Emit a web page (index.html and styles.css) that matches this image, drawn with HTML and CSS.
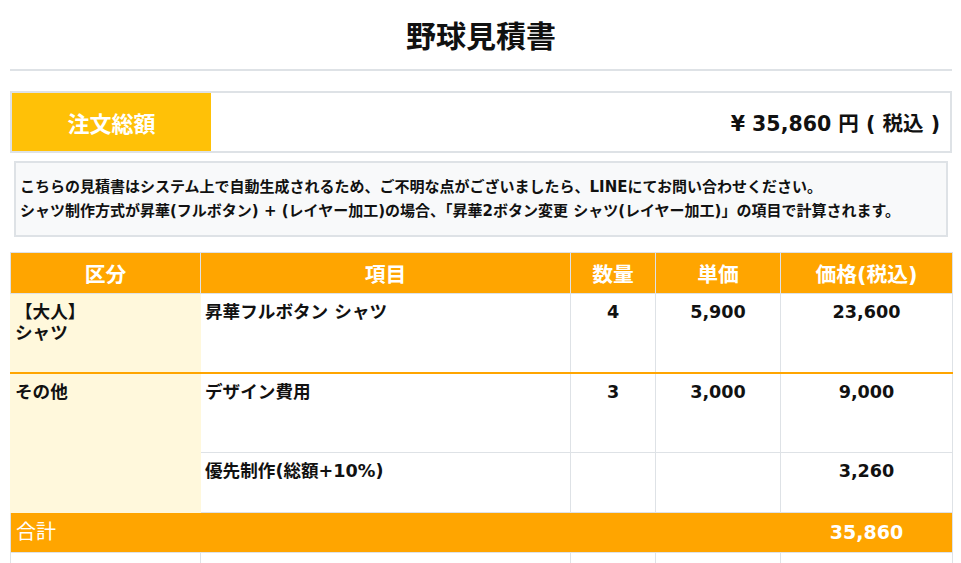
FILE: index.html
```html
<!DOCTYPE html>
<html lang="ja">
<head>
<meta charset="utf-8">
<title>野球見積書</title>
<link rel="stylesheet" href="styles.css">
</head>
<body>
<div class="page">
  <header class="title-bar">
    <h1 class="title">野球見積書</h1>
  </header>

  <section class="summary">
    <div class="summary-label">注文総額</div>
    <div class="summary-amount">¥ 35,860 円 ( 税込 )</div>
  </section>

  <section class="note">
    <p>こちらの見積書はシステム上で自動生成されるため、ご不明な点がございましたら、LINEにてお問い合わせください。</p>
    <p>シャツ制作方式が昇華(フルボタン) + (レイヤー加工)の場合、「昇華2ボタン変更 シャツ(レイヤー加工)」の項目で計算されます。</p>
  </section>

  <table class="estimate">
    <colgroup>
      <col class="c-cat">
      <col class="c-item">
      <col class="c-qty">
      <col class="c-unit">
      <col class="c-price">
    </colgroup>
    <thead>
      <tr>
        <th>区分</th>
        <th>項目</th>
        <th>数量</th>
        <th>単価</th>
        <th>価格(税込)</th>
      </tr>
    </thead>
    <tbody>
      <tr class="row-main">
        <td class="cat">【大人】<br>シャツ</td>
        <td>昇華フルボタン シャツ</td>
        <td class="num">4</td>
        <td class="num">5,900</td>
        <td class="num">23,600</td>
      </tr>
      <tr class="row-main group-sep">
        <td class="cat" rowspan="2">その他</td>
        <td>デザイン費用</td>
        <td class="num">3</td>
        <td class="num">3,000</td>
        <td class="num">9,000</td>
      </tr>
      <tr class="row-sub">
        <td>優先制作(総額+10%)</td>
        <td class="num"></td>
        <td class="num"></td>
        <td class="num">3,260</td>
      </tr>
      <tr class="row-total">
        <td colspan="4" class="total-label">合計</td>
        <td class="num total-value">35,860</td>
      </tr>
      <tr class="row-blank">
        <td></td>
        <td></td>
        <td></td>
        <td></td>
        <td></td>
      </tr>
    </tbody>
  </table>
</div>
</body>
</html>
```

FILE: styles.css
```css
html, body {
  margin: 0;
  padding: 0;
  background: #ffffff;
}

body {
  font-family: "DejaVu Sans", "Noto Sans CJK JP", sans-serif;
  color: #111111;
}

.page {
  width: 942px;
  margin-left: 10px;
}

.title-bar {
  padding-top: 14px;
  padding-bottom: 10px;
  border-bottom: 2px solid #dee2e6;
}

.title {
  margin: 0;
  text-align: center;
  font-size: 30px;
  line-height: 45px;
  font-weight: bold;
}

.summary {
  margin-top: 20px;
  height: 62px;
  box-sizing: border-box;
  border: 2px solid #dee2e6;
  display: flex;
}

.summary-label {
  width: 199px;
  background: #ffc107;
  color: #ffffff;
  font-size: 22px;
  font-weight: bold;
  display: flex;
  align-items: center;
  justify-content: center;
}

.summary-amount {
  flex: 1;
  display: flex;
  align-items: center;
  justify-content: flex-end;
  padding-right: 10px;
  font-size: 20.5px;
  font-weight: bold;
}

.note {
  margin: 8px 4px 0;
  padding: 12px 4px;
  border: 2px solid #dee2e6;
  background: #f8f9fa;
  font-size: 15px;
  line-height: 24px;
  font-weight: bold;
}

.note p {
  margin: 0;
  white-space: nowrap;
}

.estimate {
  margin-top: 15px;
  width: 942px;
  border-collapse: collapse;
  table-layout: fixed;
}

.c-cat { width: 190px; }
.c-item { width: 370px; }
.c-qty { width: 85px; }
.c-unit { width: 125px; }
.c-price { width: 172px; }

.estimate th {
  height: 40px;
  padding: 0;
  background: #ffa500;
  color: #ffffff;
  font-size: 20.8px;
  font-weight: bold;
  text-align: center;
  vertical-align: middle;
  border: 1px solid #dee2e6;
}

.estimate td {
  padding: 8px 4px;
  border: 1px solid #dee2e6;
  vertical-align: top;
  font-size: 17.6px;
  line-height: 21px;
  font-weight: bold;
  color: #111111;
}

.estimate td.num {
  text-align: center;
}

.estimate td.cat {
  background: #fff8dc;
  border-color: #fff8dc;
}

.row-main td {
  height: 62px;
}

.estimate .group-sep td,
.estimate .group-sep td.cat {
  border-top: 2px solid #ffa500;
}

.row-sub td {
  height: 43px;
}

.estimate .row-total td {
  height: 39px;
  padding-top: 0;
  padding-bottom: 0;
  background: #ffa500;
  color: #ffffff;
  vertical-align: middle;
}

.estimate .row-total td.total-label {
  padding-left: 5px;
  font-size: 20px;
  font-weight: normal;
  border-right-color: #ffa500;
}

.estimate .row-total td.total-value {
  font-size: 19px;
  border-left-color: #ffa500;
}

.row-blank td {
  height: 30px;
}
```
